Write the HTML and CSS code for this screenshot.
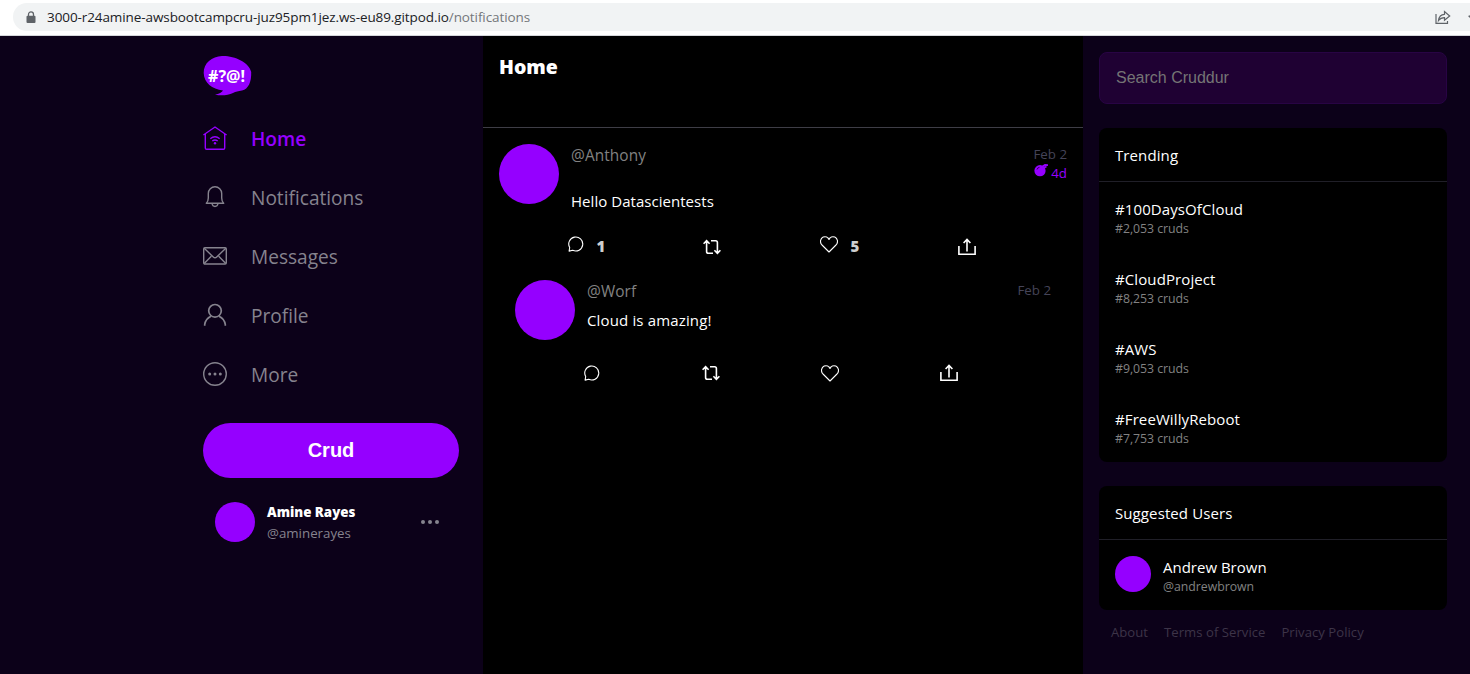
FILE: index.html
```html
<!DOCTYPE html>
<html lang="en">
<head>
<meta charset="utf-8">
<title>Cruddur</title>
<link rel="stylesheet" href="styles.css">
</head>
<body>
<svg class="defs" width="0" height="0" aria-hidden="true">
  <symbol id="reply" viewBox="0 0 16 16"><path d="M1.1 15.1 1.7 11.5A7 7 0 1 1 4.7 14.3Z" fill="none" stroke="currentColor" stroke-width="1.1" stroke-linejoin="round"/></symbol>
  <symbol id="repost" viewBox="0 0 18 16"><path d="M.6 4.7 3.6 1.6 6.6 4.7M3.6 1.8V12.5Q3.6 14.3 5.4 14.3H10M8 1.7H12.6Q14.4 1.7 14.4 3.5V14M11.4 11.2 14.4 14.3 17.4 11.2" fill="none" stroke="currentColor" stroke-width="1.6"/></symbol>
  <symbol id="heart" viewBox="0 0 18 17"><path d="M9 16 2 9C-.6 6.2.5 2.3 3.2 1.1 5.5.1 8 1.2 9 3.4 10 1.2 12.5.1 14.8 1.1 17.5 2.3 18.6 6.2 16 9Z" fill="none" stroke="currentColor" stroke-width="1.1" stroke-linejoin="round"/></symbol>
  <symbol id="share" viewBox="0 0 18 18"><path d="M.9 8V16.2H17.1V8M9 13.5V1.5M5.6 5 9 1.5 12.4 5" fill="none" stroke="currentColor" stroke-width="1.6"/></symbol>
</svg>

<header class="browser">
  <div class="address">
    <svg class="lock" width="10" height="13" viewBox="0 0 10 13"><path d="M2.5 5V3.4a2.5 2.5 0 0 1 5 0V5" fill="none" stroke="#5f6368" stroke-width="1.3"/><rect x=".5" y="4.7" width="9" height="7.3" rx="1" fill="#5f6368"/></svg>
    <span class="url">3000-r24amine-awsbootcampcru-juz95pm1jez.ws-eu89.gitpod.io<span class="path">/notifications</span></span>
    <svg class="send" width="16" height="15" viewBox="0 0 16 15"><path d="M1 4V13.4H12.5V11M3.5 10.5C4 6.5 6 4.5 9.5 4.3V1.5L14.7 6 9.5 10.3V7.6C7 7.6 5 8.5 3.5 10.5Z" fill="none" stroke="#5f6368" stroke-width="1.2"/></svg>
    <svg class="star" width="2" height="8" viewBox="0 0 2 8"><path d="M0 3 2 2.3V5Z" fill="#5f6368"/></svg>
  </div>
</header>

<div class="app">
  <nav class="sidebar">
    <svg class="logo" width="50" height="42" viewBox="0 0 50 42">
      <path d="M19 1C31 .5 46 7 48.2 17 48.500 27 45.500 34 39 35.500 35 36 33 36.500 30 38 25 40.500 17 41 12 39.500 16 39 19 37 20 35.500 9 34 1 28 .7 18 .500 8 9 1.500 19 1Z" fill="#9500ff"/>
      <text class="logo-text" x="5" y="26.500" textLength="37" lengthAdjust="spacingAndGlyphs">#?@!</text>
    </svg>
    <a class="item active"><svg width="24" height="24" viewBox="0 0 24 24"><path d="M.4 9 12 1 23.6 9M2.3 7.8V22Q2.3 23.3 3.6 23.3H20.4Q21.7 23.3 21.7 22V7.8M7.3 12.7Q12 8.8 16.7 12.7M9.3 15Q12 12.9 14.7 15" fill="none" stroke="currentColor" stroke-width="1.4"/><circle cx="12" cy="17.2" r="1.2" fill="currentColor"/></svg><span>Home</span></a>
    <a class="item"><svg width="24" height="24" viewBox="0 0 24 24"><path d="M3.3 18.2Q5.3 16.5 5.3 13V8.5A6.7 6.7 0 0 1 18.7 8.5V13Q18.7 16.5 20.7 18.2ZM9 18.5Q9.5 21.5 12 21.5T15 18.5" fill="none" stroke="currentColor" stroke-width="1.4" stroke-linejoin="round"/></svg><span>Notifications</span></a>
    <a class="item"><svg width="24" height="24" viewBox="0 0 24 24"><rect x=".7" y="3.7" width="22.6" height="16.3" rx="1.2" fill="none" stroke="currentColor" stroke-width="1.4"/><path d="M1.2 4.2 10.3 13Q12 14.7 13.7 13L22.8 4.2M1.2 19.5 8.3 12.2M22.8 19.5 15.7 12.2" fill="none" stroke="currentColor" stroke-width="1.4"/></svg><span>Messages</span></a>
    <a class="item"><svg width="24" height="24" viewBox="0 0 24 24"><circle cx="12" cy="7.8" r="6.3" fill="none" stroke="currentColor" stroke-width="1.7"/><path d="M1.7 22.7V21.5Q2.5 15.8 8 13.2M22.3 22.7V21.5Q21.5 15.8 16 13.2" fill="none" stroke="currentColor" stroke-width="1.7"/></svg><span>Profile</span></a>
    <a class="item"><svg width="24" height="24" viewBox="0 0 24 24"><circle cx="12" cy="12" r="11.3" fill="none" stroke="currentColor" stroke-width="1.4"/><g fill="currentColor"><circle cx="6.7" cy="12" r="1.5"/><circle cx="12" cy="12" r="1.5"/><circle cx="17.3" cy="12" r="1.5"/></g></svg><span>More</span></a>
    <button class="crud">Crud</button>
    <div class="profile">
      <span class="avatar small"></span>
      <div class="who"><b>Amine Rayes</b><span>@aminerayes</span></div>
      <svg width="20" height="6" viewBox="0 0 20 6" fill="currentColor"><circle cx="3" cy="3" r="2"/><circle cx="10" cy="3" r="2"/><circle cx="17" cy="3" r="2"/></svg>
    </div>
  </nav>

  <main class="feed">
    <div class="feed-head"><h1>Home</h1></div>
    <article class="post">
      <div class="post-top">
        <span class="avatar"></span>
        <div class="post-body"><span class="handle">@Anthony</span><p class="message late">Hello Datascientests</p></div>
        <div class="times"><span>Feb 2</span><span class="expires"><svg width="14" height="14" viewBox="0 0 14 14"><circle cx="6" cy="6.7" r="5.6" fill="#9500ff"/><path d="M8.5 2.5 11 .9 14 1.2M9.5 4 12.5 2.5" fill="none" stroke="#9500ff" stroke-width="1.8"/><path d="M3 5.5Q3.5 3.5 5.5 3.3" fill="none" stroke="#35005c" stroke-width="1"/></svg>4d</span></div>
      </div>
      <div class="actions first">
        <div class="action raised"><svg width="16" height="16"><use href="#reply"/></svg><b>1</b></div>
        <div class="action"><svg width="18" height="16"><use href="#repost"/></svg></div>
        <div class="action raised"><svg width="18" height="17"><use href="#heart"/></svg><b>5</b></div>
        <div class="action"><svg width="18" height="18"><use href="#share"/></svg></div>
      </div>
    </article>
    <article class="post nested">
      <div class="post-top">
        <span class="avatar"></span>
        <div class="post-body"><span class="handle">@Worf</span><p class="message">Cloud is amazing!</p></div>
        <div class="times"><span>Feb 2</span></div>
      </div>
      <div class="actions second">
        <div class="action"><svg width="16" height="16"><use href="#reply"/></svg></div>
        <div class="action"><svg width="18" height="16"><use href="#repost"/></svg></div>
        <div class="action"><svg width="18" height="17"><use href="#heart"/></svg></div>
        <div class="action"><svg width="18" height="18"><use href="#share"/></svg></div>
      </div>
    </article>
  </main>

  <aside class="extras">
    <input class="search" type="text" placeholder="Search Cruddur">
    <section class="card">
      <h2>Trending</h2>
      <div class="trend"><span>#100DaysOfCloud</span><small>#2,053 cruds</small></div>
      <div class="trend"><span>#CloudProject</span><small>#8,253 cruds</small></div>
      <div class="trend"><span>#AWS</span><small>#9,053 cruds</small></div>
      <div class="trend"><span>#FreeWillyReboot</span><small>#7,753 cruds</small></div>
    </section>
    <section class="card">
      <h2>Suggested Users</h2>
      <div class="user"><span class="avatar tiny"></span><div class="user-text"><span>Andrew Brown</span><small>@andrewbrown</small></div></div>
    </section>
    <footer><a>About</a><a>Terms of Service</a><a>Privacy Policy</a></footer>
  </aside>
</div>
</body>
</html>
```

FILE: styles.css
```css
* { box-sizing: border-box; }
body { margin: 0; height: 674px; overflow: hidden; background: #0c0119; color: #fff; font-family: "Open Sans", "Noto Sans", sans-serif; font-size: 15px; }
svg { display: block; flex: none; }
.defs { position: absolute; }
h1, h2, p { margin: 0; font-weight: 400; }

.browser { height: 36px; padding: 3px 0 0 13px; background: #fff; border-bottom: 1px solid #d5d7db; }
.address { display: flex; align-items: center; height: 28px; padding-left: 13px; background: #f1f3f4; border-radius: 14px 0 0 14px; overflow: hidden; }
.url { margin-left: 11px; color: #202124; font-size: 13.5px; letter-spacing: -.09px; white-space: nowrap; }
.path { color: #74777b; }
.send { margin-left: auto; margin-right: 17px; }

.app { display: grid; grid-template-columns: 483px 600px 1fr; height: 638px; }
.avatar { flex: none; width: 60px; height: 60px; border-radius: 50%; background: #9500ff; }
.avatar.small { width: 40px; height: 40px; }
.avatar.tiny { width: 36px; height: 36px; }

.sidebar { padding: 19px 24px 0 203px; color: #86838e; }
.logo { margin-bottom: 12px; }
.logo-text { fill: #fff; font: 700 15.5px "Noto Sans", sans-serif; }
.item { display: flex; align-items: center; height: 59px; gap: 24px; font-size: 19.1px; line-height: 28px; }
.active { color: #9500ff; font-weight: 600; }
.item svg { margin-bottom: 2px; }
.crud { display: block; width: 256px; height: 55px; margin-top: 19px; padding: 0; border: 0; border-radius: 28px; background: #9500ff; color: #fff; font: 700 20px "Liberation Sans", Arial, sans-serif; }
.profile { display: flex; align-items: center; height: 40px; margin-top: 24px; padding: 0 19px 0 12px; }
.who { display: grid; flex: 1; margin-left: 12px; padding-top: 2px; line-height: 21px; font-size: 13.3px; }
.who b { color: #fff; font-weight: 800; }

.feed { background: #000; }
.feed-head { height: 92px; padding: 17px 16px; border-bottom: 1px solid #3e3d46; }
h1 { font-size: 19.5px; font-weight: 800; line-height: 28px; }
.post { padding: 16px 16px 0; }
.post-top { display: flex; height: 76px; }
.post-body { flex: 1; margin-left: 12px; }
.handle { display: block; color: #828282; font-size: 15.4px; line-height: 24px; letter-spacing: .08px; }
.message { margin-top: 5px; line-height: 22px; letter-spacing: .15px; }
.message.late { margin-top: 22px; letter-spacing: .04px; }
.times { display: flex; flex-direction: column; align-items: flex-end; color: #454458; font-size: 13.3px; line-height: 20px; }
.expires { display: flex; gap: 3px; color: #9500ff; line-height: 19px; }
.actions { display: grid; color: #fff; }
.actions.first { grid-template-columns: 135px 117px 138px 1fr; height: 40px; margin: 8px 0 0 69px; padding-top: 8px; }
.actions.second { grid-template-columns: 118px 119px 119px 1fr; margin: 6px 0 0 69px; }
.nested { margin: 0 16px; padding-top: 12px; }
.action { display: flex; align-items: center; height: 22px; }
.action b { margin: 4px 0 0 12.5px; font-size: 15px; font-weight: 800; line-height: 18px; color: #cfcfcf; }
.raised { transform: translateY(-3px); }

.extras { padding: 16px 23px 0 16px; }
.search { display: block; width: 100%; height: 52px; padding: 0 16px; border: 1px solid #280444; border-radius: 8px; background: #1f0133; font: 16px "Liberation Sans", Arial, sans-serif; }
.search::placeholder { color: #757575; }
.card { margin-top: 24px; background: #000; border-radius: 8px; }
.card h2 { height: 54px; padding: 0 16px; border-bottom: 1px solid #201f28; font-size: 15px; line-height: 54px; letter-spacing: .1px; }
.trend { display: flex; flex-direction: column; height: 70px; padding: 17px 16px 0; }
.trend span { line-height: 21px; letter-spacing: .1px; }
small { color: #828282; font-size: 12.3px; line-height: 17px; letter-spacing: -.03px; }
.user { display: flex; height: 70px; padding: 16px 16px 0; }
.user-text { display: flex; flex-direction: column; margin-left: 12px; padding-top: 1px; line-height: 21px; }
footer { display: flex; gap: 16px; padding: 12px 12px 0; color: #3d3448; font-size: 13.1px; line-height: 20px; letter-spacing: .04px; }
footer a { white-space: nowrap; }
```
